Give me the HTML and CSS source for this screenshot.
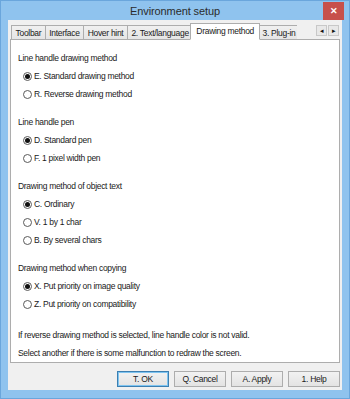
FILE: index.html
```html
<!DOCTYPE html>
<html lang="en">
<head>
    <meta charset="UTF-8">
    <title>Environment setup</title>
    <link rel="stylesheet" href="styles.css">
</head>
<body>

<div class="window">
    <div class="titlebar">
        <span class="title">Environment setup</span>
        <span class="close">&#x2715;</span>
    </div>

    <div class="client">
        <div class="tabstrip">
            <div class="tabs">
                <div class="tab">Toolbar</div>
                <div class="tab">Interface</div>
                <div class="tab">Hover hint</div>
                <div class="tab">2. Text/language</div>
                <div class="tab active">Drawing method</div>
                <div class="tab clipped">3. Plug-in</div>
            </div>
            <div class="scroller">
                <span class="arrow">&#9666;</span>
                <span class="arrow">&#9656;</span>
            </div>
        </div>

        <div class="panel">
            <div class="group">
                <div class="label">Line handle drawing method</div>
                <div class="option"><span class="radio checked"></span>E. Standard drawing method</div>
                <div class="option"><span class="radio"></span>R. Reverse drawing method</div>
            </div>
            <div class="group">
                <div class="label">Line handle pen</div>
                <div class="option"><span class="radio checked"></span>D. Standard pen</div>
                <div class="option"><span class="radio"></span>F. 1 pixel width pen</div>
            </div>
            <div class="group">
                <div class="label">Drawing method of object text</div>
                <div class="option"><span class="radio checked"></span>C. Ordinary</div>
                <div class="option"><span class="radio"></span>V. 1 by 1 char</div>
                <div class="option"><span class="radio"></span>B. By several chars</div>
            </div>
            <div class="group">
                <div class="label">Drawing method when copying</div>
                <div class="option"><span class="radio checked"></span>X. Put priority on image quality</div>
                <div class="option"><span class="radio"></span>Z. Put priority on compatibility</div>
            </div>
            <div class="notes">
                <p>If reverse drawing method is selected, line handle color is not valid.</p>
                <p>Select another if there is some malfunction to redraw the screen.</p>
            </div>
        </div>

        <div class="buttons">
            <button class="default">T. OK</button>
            <button>Q. Cancel</button>
            <button>A. Apply</button>
            <button>1. Help</button>
        </div>
    </div>
</div>

</body>
</html>
```

FILE: styles.css
```css
:root {
    --frame-color: #8fc3ee;
    --frame-border: #6aa6dc;
    --face-color: #f0f0f0;
    --line-color: #adadad;
    --text-color: #1a1a1a;
}

* {
    box-sizing: border-box;
}

body {
    margin: 0;
    font-family: 'Liberation Sans', Arial, sans-serif;
    font-size: 8.5px;
    letter-spacing: -0.3px;
    color: var(--text-color);
}

.window {
    width: 350px;
    height: 399px;
    display: flex;
    flex-direction: column;
    background-color: var(--frame-color);
    border: 1px solid var(--frame-border);
    padding: 0 7px 8px 7px;
}

.titlebar {
    position: relative;
    height: 21px;
    display: flex;
    justify-content: center;
    align-items: center;
}

.title {
    font-size: 11px;
    letter-spacing: -0.1px;
    color: #2b2b2b;
    padding-top: 1px;
}

.close {
    position: absolute;
    top: 1px;
    right: -2px;
    width: 21px;
    height: 18px;
    display: flex;
    justify-content: center;
    align-items: center;
    background-color: #c7504b;
    color: #fff;
    font-size: 9px;
    font-weight: bold;
}

.client {
    flex: 1;
    display: flex;
    flex-direction: column;
    background-color: var(--face-color);
    padding: 0 2px 2px 2px;
}

.tabstrip {
    height: 20px;
    display: flex;
    justify-content: space-between;
    align-items: flex-end;
    margin-bottom: -1px;
    position: relative;
    z-index: 1;
}

.tabs {
    display: flex;
    align-items: flex-end;
    padding-left: 1px;
}

.tab {
    height: 15px;
    padding: 0 3.5px;
    display: flex;
    align-items: center;
    white-space: nowrap;
    background: linear-gradient(#f0f0f0, #e5e5e5);
    border: 1px solid var(--line-color);
    margin-right: -1px;
}

.tab.active {
    height: 17px;
    padding: 0 5px 1px;
    margin: 0 -2px 0 -2px;
    background: #fff;
    border-bottom-color: #fff;
    position: relative;
    z-index: 2;
}

.tab.clipped {
    border-right: none;
    padding-right: 2px;
}

.scroller {
    display: flex;
    gap: 1px;
    margin-bottom: 4px;
    margin-right: 1px;
}

.arrow {
    width: 11px;
    height: 11px;
    display: flex;
    justify-content: center;
    align-items: center;
    border: 1px solid #c8c8c8;
    background-color: #e8e8e8;
    font-size: 7px;
    color: #111;
}

.panel {
    flex: 1;
    background-color: #fff;
    border: 1px solid var(--line-color);
    padding: 9px 7px 0 7px;
}

.group {
    margin-bottom: 10px;
}

.label,
.option {
    height: 18px;
    display: flex;
    align-items: center;
}

.option {
    padding-left: 5px;
}

.radio {
    width: 9px;
    height: 9px;
    border: 1px solid #5a5a5a;
    border-radius: 50%;
    background-color: #fff;
    margin-right: 2px;
    display: flex;
    justify-content: center;
    align-items: center;
}

.radio.checked::after {
    content: '';
    width: 5px;
    height: 5px;
    border-radius: 50%;
    background-color: #111;
}

.notes {
    padding-top: 3px;
}

.notes p {
    margin: 0;
    height: 18px;
    display: flex;
    align-items: center;
}

.buttons {
    height: 25px;
    display: flex;
    justify-content: flex-end;
    align-items: flex-end;
    gap: 5px;
    padding-bottom: 1px;
}

button {
    width: 52px;
    height: 16px;
    padding: 0;
    font-family: inherit;
    font-size: 8.5px;
    letter-spacing: -0.3px;
    color: var(--text-color);
    background: linear-gradient(#f2f2f2, #e3e3e3);
    border: 1px solid var(--line-color);
}

button.default {
    border-color: #3c7fb1;
    box-shadow: inset 0 0 0 1px #7fc4f0;
}
```
